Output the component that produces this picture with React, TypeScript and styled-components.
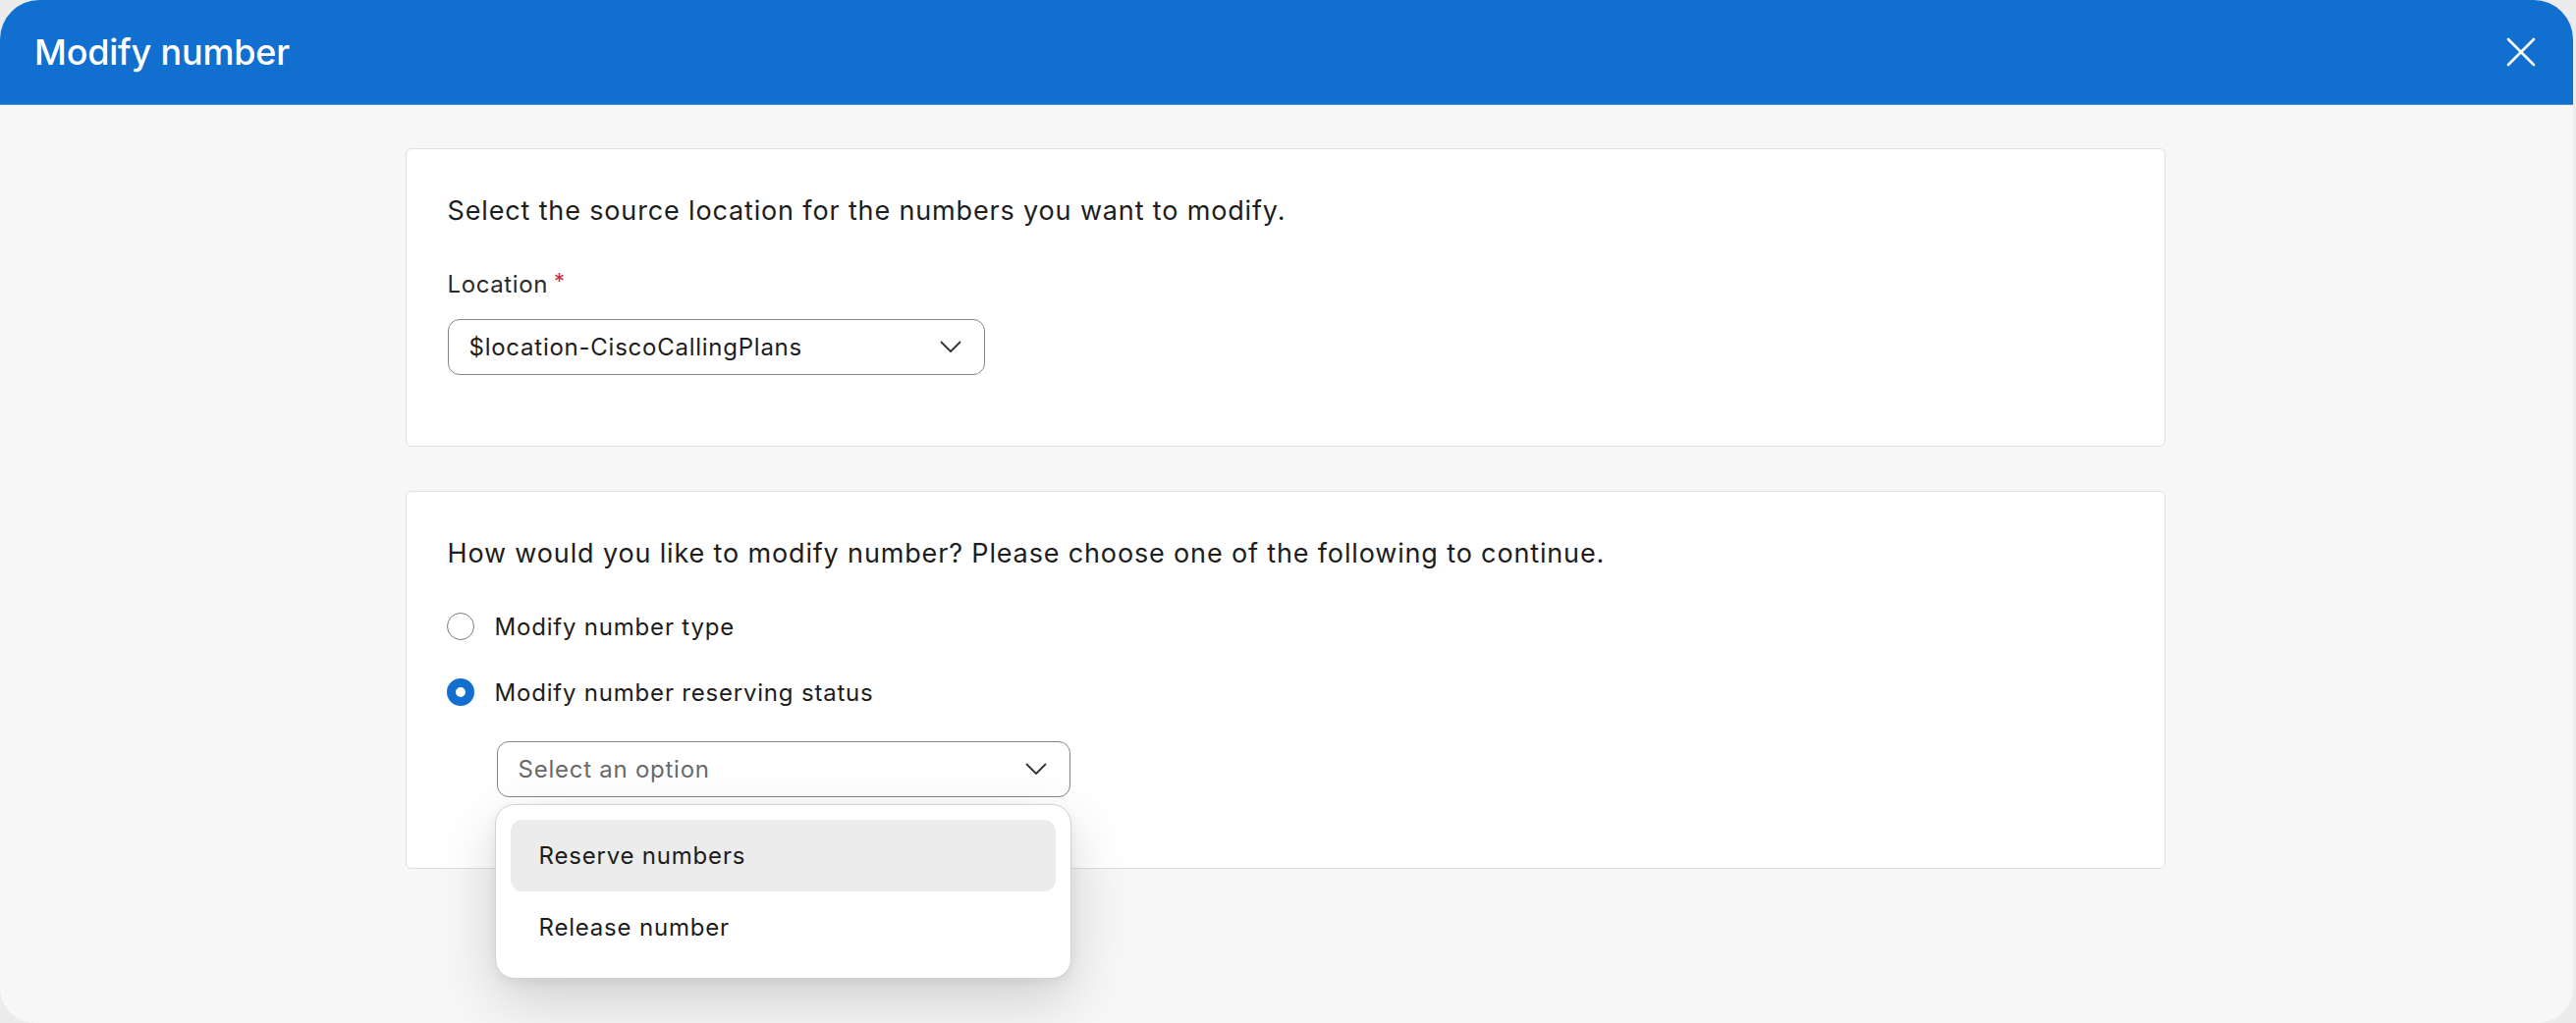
import React from "react";
import styled, { createGlobalStyle } from "styled-components";

const GlobalStyle = createGlobalStyle`
  html, body {
    margin: 0;
    padding: 0;
    background: #ececec;
    font-family: Inter, "Noto Sans", "Liberation Sans", sans-serif;
    color: #1d1d1d;
  }
  * { box-sizing: border-box; }
`;

const Page = styled.div`
  width: 100%;
  height: 1042px;
  overflow: hidden;
`;

const Dialog = styled.div`
  width: 2620px;
  height: 1042px;
  display: flex;
  flex-direction: column;
  border-radius: 40px 40px 36px 36px;
  overflow: hidden;
  background: #f7f7f7;
`;

const Header = styled.header`
  height: 107px;
  flex-shrink: 0;
  display: flex;
  align-items: center;
  justify-content: space-between;
  padding: 0 38px 0 35px;
  background: #1170cf;
  border-bottom: 1px solid #4d93dc;
`;

const Title = styled.h1`
  margin: 0;
  font-size: 36px;
  font-weight: 500;
  color: #ffffff;
  letter-spacing: -0.2px;
`;

const CloseButton = styled.button`
  display: flex;
  align-items: center;
  justify-content: center;
  width: 30px;
  height: 30px;
  padding: 0;
  border: none;
  background: transparent;
  cursor: pointer;
`;

const Body = styled.main`
  flex: 1;
  display: flex;
  flex-direction: column;
  align-items: center;
  gap: 45px;
  padding: 44px 3px 0 0;
`;

const Card = styled.section`
  width: 1792px;
  padding: 43px 42px 72px;
  background: #ffffff;
  border: 1px solid #e0e0e0;
  border-radius: 6px;
`;

const Question = styled.p`
  margin: 0;
  font-size: 27px;
  line-height: 40px;
  letter-spacing: 0.85px;
  color: #1d1d1d;
`;

const FieldLabel = styled.div`
  margin-top: 35px;
  font-size: 24px;
  line-height: 32px;
  letter-spacing: 0.6px;
  color: #2a2a2a;
`;

const Required = styled.span`
  color: #c6284a;
  font-size: 22px;
  margin-left: 6px;
  vertical-align: 4px;
`;

const SelectBox = styled.div<{ $width: number; $top: number }>`
  width: ${(p) => p.$width}px;
  height: 57px;
  margin-top: ${(p) => p.$top}px;
  display: flex;
  align-items: center;
  justify-content: space-between;
  padding: 0 23px 0 21px;
  background: #ffffff;
  border: 1.5px solid #858585;
  border-radius: 12px;
`;

const SelectValue = styled.span<{ $placeholder?: boolean }>`
  font-size: 24px;
  letter-spacing: 0.75px;
  color: ${(p) => (p.$placeholder ? "#6a6a6a" : "#1d1d1d")};
`;

const RadioGroup = styled.div`
  margin-top: 34px;
  display: flex;
  flex-direction: column;
  gap: 27px;
`;

const RadioRow = styled.label`
  display: flex;
  align-items: center;
  gap: 21px;
  height: 40px;
  font-size: 24px;
  letter-spacing: 0.8px;
  color: #1d1d1d;
`;

const RadioCircle = styled.span<{ $checked?: boolean }>`
  width: 28px;
  height: 28px;
  margin-left: -1px;
  border-radius: 50%;
  flex-shrink: 0;
  background: #ffffff;
  border: ${(p) => (p.$checked ? "9px solid #1170cf" : "1.5px solid #7d7d7d")};
`;

const SubField = styled.div`
  position: relative;
  margin-left: 50px;
  margin-top: 30px;
  width: 584px;
`;

const Menu = styled.ul`
  position: absolute;
  top: 64px;
  left: -2px;
  width: 587px;
  margin: 0;
  padding: 15px;
  list-style: none;
  background: #ffffff;
  border: 1px solid #d2d2d2;
  border-radius: 20px;
  box-shadow: 0 22px 60px rgba(0, 0, 0, 0.16), 0 4px 12px rgba(0, 0, 0, 0.06);
  z-index: 10;
`;

const MenuItem = styled.li<{ $active?: boolean }>`
  height: 73px;
  display: flex;
  align-items: center;
  padding-left: 29px;
  font-size: 24px;
  letter-spacing: 0.8px;
  color: #1d1d1d;
  border-radius: 12px;
  background: ${(p) => (p.$active ? "#ececec" : "transparent")};
`;

const Chevron = () => (
  <svg width="22" height="13" viewBox="0 0 22 13" fill="none">
    <polyline points="1.5,1.5 11,11 20.5,1.5" stroke="#333" strokeWidth="1.8" strokeLinecap="round" strokeLinejoin="round" />
  </svg>
);

const CloseIcon = () => (
  <svg width="30" height="30" viewBox="0 0 30 30" fill="none">
    <path d="M2 2 L28 28 M28 2 L2 28" stroke="#ffffff" strokeWidth="2.6" strokeLinecap="round" />
  </svg>
);

const options = ["Reserve numbers", "Release number"];

const App: React.FC = () => {
  return (
    <>
      <GlobalStyle />
      <Page>
        <Dialog>
          <Header>
            <Title>Modify number</Title>
            <CloseButton aria-label="Close">
              <CloseIcon />
            </CloseButton>
          </Header>
          <Body>
            <Card>
              <Question>Select the source location for the numbers you want to modify.</Question>
              <FieldLabel>
                Location<Required>*</Required>
              </FieldLabel>
              <SelectBox $width={547} $top={19}>
                <SelectValue>$location-CiscoCallingPlans</SelectValue>
                <Chevron />
              </SelectBox>
            </Card>
            <Card>
              <Question>
                How would you like to modify number? Please choose one of the following to continue.
              </Question>
              <RadioGroup>
                <RadioRow>
                  <RadioCircle />
                  Modify number type
                </RadioRow>
                <RadioRow>
                  <RadioCircle $checked />
                  Modify number reserving status
                </RadioRow>
              </RadioGroup>
              <SubField>
                <SelectBox $width={584} $top={0}>
                  <SelectValue $placeholder>Select an option</SelectValue>
                  <Chevron />
                </SelectBox>
                <Menu>
                  {options.map((o, i) => (
                    <MenuItem key={o} $active={i === 0}>
                      {o}
                    </MenuItem>
                  ))}
                </Menu>
              </SubField>
            </Card>
          </Body>
        </Dialog>
      </Page>
    </>
  );
};

export default App;
